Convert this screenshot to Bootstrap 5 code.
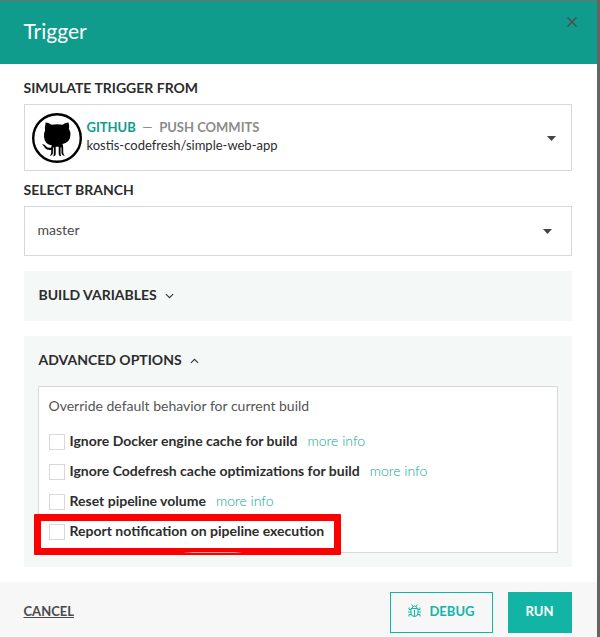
<!DOCTYPE html>
<html lang="en">
<head>
<meta charset="utf-8">
<title>Trigger</title>
<link href="https://cdn.jsdelivr.net/npm/bootstrap@5.3.0/dist/css/bootstrap.min.css" rel="stylesheet">
<style>
body{font-family:Lato,"Liberation Sans",sans-serif;font-size:14px;line-height:20px;color:#2d2d2d;background:#646464;height:637px;overflow:hidden}
.dialog-pane{width:597px;height:637px;background:#fff;border-top:1px solid #757070}
.dialog-head{height:63px;background:#109c8c;padding:17px 20px 0 23.500px}
.dialog-head h1{font-size:21px;line-height:26px;font-weight:400}
.close-icon{margin-top:-1px}
.dialog-main{height:518px;padding:14px 25px 0 24px}
.heading{font-size:14px;line-height:20px;font-weight:700;color:#2c2c2c}
.page-label{margin-left:-.5px}
.box{border:1px solid #d8d8d8;background:#fff}
.source-box{height:67px;margin-top:6px;padding:0 15px 0 7px}
.source-text{font-size:13px;line-height:18px;margin-left:4.500px;margin-top:-4px}
.dash{margin:0 6.500px}
.arrow{margin-top:1px}
.branch-box .arrow{margin-top:3px}
.teal{color:#109c8c}
.grey{color:#8c8c8c}
.branch-label{margin-top:9px}
.branch-box{height:50px;margin-top:6px;padding:0 19px 2px 12.500px;color:#4a4a4a}
.panel{background:#f4f8f7;margin-top:15px;padding:14px 14px 0 14.500px}
.panel-vars{height:50px}
.panel-adv{height:231px;padding-left:14px}
.panel-adv .heading{padding-left:.5px}
.chevron{margin-left:8.500px;margin-top:1px}
.options{height:167px;margin-top:16px;padding:9px 10px 0}
.intro{color:#555;margin-bottom:15px;margin-left:-.5px}
.option{height:30px}
.tick{width:16px;height:16px;border:1px solid #d8d8d8;background:#fff;margin:3px 4.500px 0 0}
.more{color:#12a596;font-weight:300;margin-left:10px}
.outline-mark{left:34px;top:513px;width:307px;height:41px;border:7px solid #f00;border-radius:1px}
.mark-gap{left:142px;bottom:-5px;width:60px;height:1px;background:linear-gradient(90deg,#f00,#f0a0a0 15%,#f0a0a0 85%,#f00)}
.dialog-foot{height:55px;background:#f7f7f7;padding:10px 25px 0 24px}
.cancel{font-size:13px;line-height:18px;font-weight:700;color:#4a4a4a;margin-top:10px;margin-left:-.5px}
.action{height:41px;border:1px solid #12b5a5;border-radius:0;font-size:13px;line-height:18px;font-weight:700;padding:0 0 3px}
.action-debug{width:103px;color:#12b5a5}
.action-run{width:64px;background:#12b5a5;color:#fff;margin-left:15px;padding-right:1px}
</style>
<script src="https://cdn.jsdelivr.net/npm/bootstrap@5.3.0/dist/js/bootstrap.bundle.min.js"></script>
</head>
<body>
<div class="dialog-pane position-relative">
  <header class="dialog-head d-flex justify-content-between align-items-start">
    <h1 class="text-white m-0">Trigger</h1>
    <svg class="close-icon" width="10" height="10" viewBox="0 0 10 10" stroke="#4b4f4e" stroke-width="1.5" fill="none"><path d="M.5.5l9 9M9.500.5l-9 9"/></svg>
  </header>
  <main class="dialog-main">
    <h2 class="heading page-label mb-0">SIMULATE TRIGGER FROM</h2>
    <div class="box source-box d-flex align-items-center">
      <svg width="50" height="50" viewBox="0 0 50 50"><circle cx="25" cy="25" r="23.800" fill="#fff" stroke="#000" stroke-width="2.400"/><path d="M13.500 9.500q3 0 6 2.200 5.500-1 11 0 3-2.200 6-2.200 1.200 3.500.4 6.500 2 2.500 1.500 6.500-.6 7.300-8 8.500.8 1 .8 3.500v5q.2 2 1.500 3.200-3-.2-3.200-2.700v-5.500h-.9v6.500q0 1.500.8 2.200-2.700 0-2.700-2.500v-7h-3v7q0 2.500-2.700 2.500.8-.7.8-2.200v-6.500h-.9v5.500q-.2 2.500-3.200 2.700 1.500-1.200 1.500-3.200v-2.500q-4.800.3-6.300-2.200-1-2-2.900-3.500 2.300-.5 4 1.900 1.500 2 5.200 1.500 0-1.200.8-2.200-7.400-1-8-8.500-.5-4 1.100-6.500-.8-3 .4-6.500Z"/></svg>
      <div class="source-text flex-grow-1">
        <div><b class="teal">GITHUB</b><span class="grey dash">—</span><b class="grey">PUSH COMMITS</b></div>
        <div>kostis-codefresh/simple-web-app</div>
      </div>
      <svg class="arrow" width="9" height="5" viewBox="0 0 9 5" fill="#444"><path d="M0 0h9L4.500 5Z"/></svg>
    </div>
    <h2 class="heading page-label branch-label mb-0">SELECT BRANCH</h2>
    <div class="box branch-box d-flex justify-content-between align-items-center">
      <span>master</span>
      <svg class="arrow" width="9" height="5" viewBox="0 0 9 5" fill="#444"><path d="M0 0h9L4.500 5Z"/></svg>
    </div>
    <section class="panel panel-vars">
      <h2 class="heading m-0 d-flex align-items-center">BUILD VARIABLES<svg class="chevron" width="9" height="6" viewBox="0 0 10 6" fill="none" stroke="#333" stroke-width="1.200"><path d="M1 .8l4 4 4-4"/></svg></h2>
    </section>
    <section class="panel panel-adv">
      <h2 class="heading m-0 d-flex align-items-center">ADVANCED OPTIONS<svg class="chevron" width="9" height="6" viewBox="0 0 10 6" fill="none" stroke="#333" stroke-width="1.200"><path d="M1 5.200l4-4 4 4"/></svg></h2>
      <div class="box options">
        <p class="intro mt-0">Override default behavior for current build</p>
        <div class="option d-flex"><span class="tick"></span><b>Ignore Docker engine cache for build</b><span class="more">more info</span></div>
        <div class="option d-flex"><span class="tick"></span><b>Ignore Codefresh cache optimizations for build</b><span class="more">more info</span></div>
        <div class="option d-flex"><span class="tick"></span><b>Reset pipeline volume</b><span class="more">more info</span></div>
        <div class="option d-flex"><span class="tick"></span><b>Report notification on pipeline execution</b></div>
      </div>
    </section>
  </main>
  <footer class="dialog-foot d-flex align-items-start">
    <a class="cancel me-auto" href="#">CANCEL</a>
    <button class="btn action action-debug d-flex align-items-center justify-content-center"><svg class="me-2" width="13" height="14" viewBox="0 0 13 14" fill="none" stroke="#12b5a5" stroke-width="1"><path d="M3 4.500h7v4.500q0 3.500-3.500 3.500T3 9ZM4 4.500q0-2.500 2.500-2.500T9 4.500M6.500 6v6.500M3.500.5L5 2.200M9.500.5L8 2.200M1 3.500v2h2M12 3.500v2h-2M0 8h3M10 8h3M1 12.500v-2h2M12 12.500v-2h-2"/></svg>DEBUG</button>
    <button class="btn action action-run">RUN</button>
  </footer>
  <div class="outline-mark position-absolute"><div class="mark-gap position-absolute"></div></div>
</div>
</body>
</html>
